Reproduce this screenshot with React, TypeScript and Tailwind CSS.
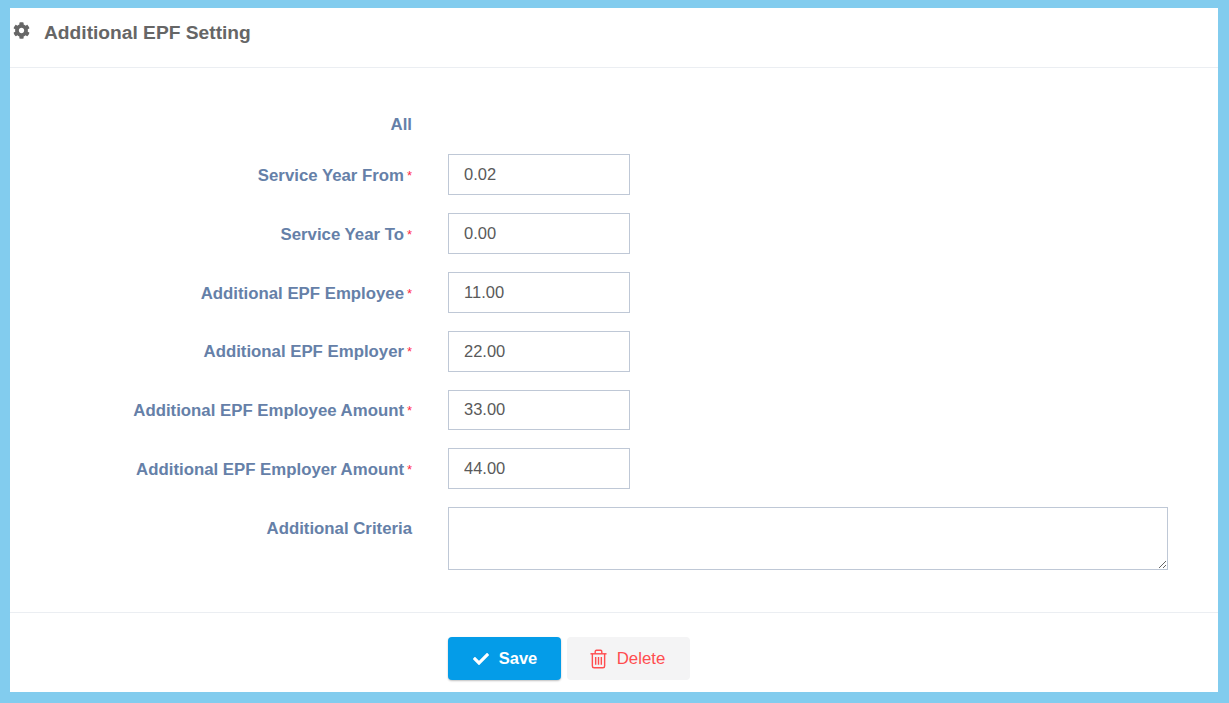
import React from 'react';
import { FaCog, FaCheck } from 'react-icons/fa';

const fields = [
  { label: 'Service Year From', value: '0.02' },
  { label: 'Service Year To', value: '0.00' },
  { label: 'Additional EPF Employee', value: '11.00' },
  { label: 'Additional EPF Employer', value: '22.00' },
  { label: 'Additional EPF Employee Amount', value: '33.00' },
  { label: 'Additional EPF Employer Amount', value: '44.00' },
];

const TrashIcon = () => (
  <svg width="17" height="20" viewBox="0 0 18 20" fill="none" stroke="currentColor" strokeWidth="1.5" className="shrink-0">
    <path d="M0.5 4.5h17" />
    <path d="M5.5 4.5V2.2c0-.8.5-1.4 1.3-1.4h4.4c.8 0 1.3.6 1.3 1.4v2.3" />
    <path d="M2.5 4.5v12.8c0 1.1.8 1.9 1.8 1.9h9.4c1 0 1.8-.8 1.8-1.9V4.5" />
    <path d="M6 8v8M9 8v8M12 8v8" />
  </svg>
);

export default function App() {
  return (
    <div className="h-[703px] overflow-hidden bg-[#82ccee] pt-2 pr-[11px] pb-[11px] pl-[10px] font-['Liberation_Sans',Arial,sans-serif]">
      <div className="flex h-full flex-col bg-white">
        <div className="flex h-[60px] shrink-0 items-start border-b border-[#ebeef2]">
          <FaCog className="mt-[14px] ml-[3px] h-[17px] w-[17px] text-[#666666]" />
          <h1 className="mt-[13px] ml-[14px] text-[19.2px] leading-[23px] font-bold text-[#666666]">Additional EPF Setting</h1>
        </div>

        <div className="flex h-[545px] shrink-0 flex-col border-b border-[#ebeef2] pt-[37px]">
          <div className="mb-[9.2px] flex h-[40px] items-start">
            <label className="w-[402px] pt-[11px] text-right text-[16.8px] leading-[18px] font-bold text-[#6580a8]">All</label>
          </div>
          {fields.map(({ label, value }) => (
            <div key={label} className="mb-[18px] flex h-[40.83px] items-start">
              <label className="w-[402px] pt-[12.8px] text-right text-[16.8px] leading-[18px] font-bold text-[#6580a8]">
                {label}
                <span className="ml-[2px] inline-block w-[6px] align-[1px] text-[13px] leading-[10px] font-normal text-[#ff2b4a]">*</span>
              </label>
              <input
                readOnly
                value={value}
                className="ml-[36px] h-full w-[182px] border border-[#bfc8d6] bg-white px-[15px] text-[16.5px] text-[#5a5a5a] outline-none"
              />
            </div>
          ))}
          <div className="flex items-start">
            <label className="w-[402px] pt-[12.8px] text-right text-[16.8px] leading-[18px] font-bold text-[#6580a8]">Additional Criteria</label>
            <textarea readOnly className="ml-[36px] block h-[63px] w-[720px] border border-[#bfc8d6] bg-white outline-none" />
          </div>
        </div>

        <div className="flex gap-[6px] pt-6 pl-[438px]">
          <button className="flex h-[43px] w-[113px] items-center justify-center gap-[10px] rounded-[4px] bg-[#049ce8] pl-[1px] text-[16.5px] font-bold text-white shadow-[0_1px_2px_rgba(0,0,0,0.25)]">
            <FaCheck className="h-[16px] w-[16px]" />
            Save
          </button>
          <button className="flex h-[43px] w-[123px] items-center justify-center gap-[10px] rounded-[4px] bg-[#f4f4f5] pr-[2px] text-[16.8px] text-[#ff4d4f]">
            <TrashIcon />
            Delete
          </button>
        </div>
      </div>
    </div>
  );
}
